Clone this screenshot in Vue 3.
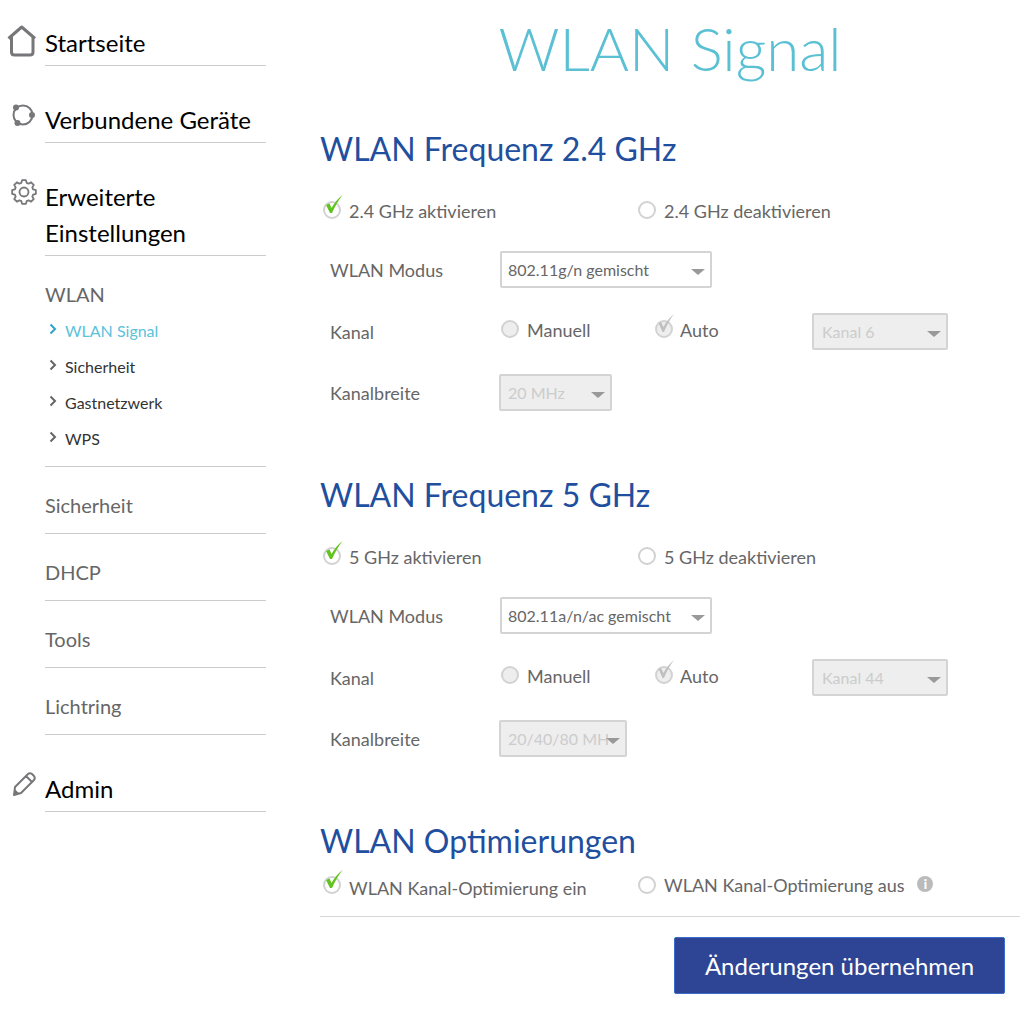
<template>
  <div class="page">
    <nav class="sidebar">
      <div class="nav-top first">
        <svg class="nav-icon" width="37" height="36" viewBox="0 0 37 36">
          <path d="M8.500 13.500 L21.700 2 L35 13.500 M11.500 11 V27 Q11.500 30 14.500 30 H30 Q33 30 33 27 V11" fill="none" stroke="#77777a" stroke-width="3" stroke-linejoin="round" />
        </svg>
        <a class="nav-text">Startseite</a>
      </div>
      <div class="nav-top">
        <svg class="nav-icon" width="37" height="36" viewBox="0 0 37 36">
          <circle cx="23" cy="13" r="9.500" fill="none" stroke="#77777a" stroke-width="2" />
          <circle cx="16" cy="5.500" r="3" fill="#77777a" />
          <circle cx="32" cy="13" r="3" fill="#77777a" />
          <circle cx="17.500" cy="21" r="3" fill="#77777a" />
        </svg>
        <a class="nav-text">Verbundene Geräte</a>
      </div>
      <div class="nav-top">
        <svg class="nav-icon" width="37" height="36" viewBox="0 0 37 36">
          <path :d="gearPath" fill="none" stroke="#77777a" stroke-width="1.800" stroke-linejoin="round" />
          <circle cx="24" cy="13" r="4.500" fill="none" stroke="#77777a" stroke-width="1.800" />
        </svg>
        <a class="nav-text">Erweiterte Einstellungen</a>
      </div>

      <div class="nav-sub">
        <div class="sub-title">WLAN</div>
        <ul>
          <li v-for="item in wlanLinks" :key="item" :class="{ active: item === 'WLAN Signal' }">
            <svg width="20" height="14" viewBox="0 0 20 14">
              <path d="M5.500 1.500 L10 6 L5.500 10.500" fill="none" stroke="currentColor" stroke-width="2" />
            </svg>
            {{ item }}
          </li>
        </ul>
      </div>

      <div v-for="item in otherLinks" :key="item" class="nav-plain">{{ item }}</div>

      <div class="nav-top admin">
        <svg class="nav-icon" width="37" height="36" viewBox="0 0 37 36">
          <path d="M15 16 L28 3 Q30 1.500 32 3 L34 5 Q35.500 7 34 9 L21 22 L14 24 Z M26 5 L32 11" fill="none" stroke="#77777a" stroke-width="2" stroke-linejoin="round" />
          <path d="M13.500 24.500 L15 18.500 L19.500 22.500 Z" fill="#77777a" />
        </svg>
        <a class="nav-text">Admin</a>
      </div>
    </nav>

    <main class="content">
      <h1>WLAN Signal</h1>

      <section v-for="band in bands" :key="band.name" class="band">
        <h2>WLAN Frequenz {{ band.name }}</h2>
        <div class="radio-row">
          <label class="radio-cell">
            <span class="radio"><svg class="tick" width="24" height="24" viewBox="0 0 24 24"><path d="M4 11 L7.500 9.500 L9.500 14 Q14 6 20.500 1 Q15 8 10 19 H8 Z" fill="#62c31f" /></svg></span>
            {{ band.name }} aktivieren
          </label>
          <label class="radio-cell">
            <span class="radio"></span>
            {{ band.name }} deaktivieren
          </label>
        </div>

        <div class="field">
          <span class="field-label">WLAN Modus</span>
          <div class="select-wrap mode">
            <select><option>{{ band.mode }}</option></select>
          </div>
        </div>

        <div class="field">
          <span class="field-label channel-label">Kanal</span>
          <label class="option manual">
            <span class="radio off"></span>
            Manuell
          </label>
          <label class="option auto">
            <span class="radio off"><svg class="tick" width="24" height="24" viewBox="0 0 24 24"><path d="M4.500 10 L7 9 L9.500 14 Q13 7 20 1 Q14.500 8 10 19 H8.500 Z" fill="#c0c0c0" /></svg></span>
            Auto
          </label>
          <div class="select-wrap channel disabled">
            <select disabled><option>{{ band.channel }}</option></select>
          </div>
        </div>

        <div class="field">
          <span class="field-label">Kanalbreite</span>
          <div class="select-wrap disabled width-select" :class="band.widthClass">
            <select disabled><option>{{ band.width }}</option></select>
          </div>
        </div>
      </section>

      <section class="optimise">
        <h2>WLAN Optimierungen</h2>
        <div class="radio-row">
          <label class="radio-cell">
            <span class="radio"><svg class="tick" width="24" height="24" viewBox="0 0 24 24"><path d="M4 11 L7.500 9.500 L9.500 14 Q14 6 20.500 1 Q15 8 10 19 H8 Z" fill="#62c31f" /></svg></span>
            WLAN Kanal-Optimierung ein
          </label>
          <label class="radio-cell up">
            <span class="radio"></span>
            WLAN Kanal-Optimierung aus
            <span class="info">i</span>
          </label>
        </div>
      </section>

      <div class="actions">
        <button type="button">Änderungen übernehmen</button>
      </div>
    </main>
  </div>
</template>

<script setup>
const wlanLinks = ['WLAN Signal', 'Sicherheit', 'Gastnetzwerk', 'WPS']
const otherLinks = ['Sicherheit', 'DHCP', 'Tools', 'Lichtring']

const bands = [
  { name: '2.4 GHz', mode: '802.11g/n gemischt', channel: 'Kanal 6', width: '20 MHz', widthClass: 'narrow' },
  { name: '5 GHz', mode: '802.11a/n/ac gemischt', channel: 'Kanal 44', width: '20/40/80 MHz', widthClass: 'wide' }
]

// Zahnrad-Umriss mit 8 Zähnen
function buildGear(cx, cy, outer, inner, teeth) {
  const step = (Math.PI * 2) / teeth
  const pts = []
  for (let i = 0; i < teeth; i++) {
    const a = i * step
    for (const [off, r] of [[-0.30, inner], [-0.17, outer], [0.17, outer], [0.30, inner]]) {
      const t = a + off * step * 1.2
      pts.push((cx + Math.cos(t) * r).toFixed(2) + ' ' + (cy + Math.sin(t) * r).toFixed(2))
    }
  }
  return 'M' + pts.join(' L') + ' Z'
}
const gearPath = buildGear(24, 13, 12, 9.5, 8)
</script>

<style scoped>
.page {
  display: flex;
  align-items: flex-start;
  width: 1025px;
  height: 1022px;
  overflow: hidden;
  font-family: Lato, "Open Sans", sans-serif;
  color: #666;
  background: #fff;
}

.sidebar {
  flex: none;
  width: 266px;
  padding-left: 8px;
  box-sizing: border-box;
  padding-top: 25px;
}

.nav-top {
  display: flex;
  align-items: flex-start;
  margin-top: 36px;
}
.nav-top.first {
  margin-top: 0;
}
.nav-icon {
  flex: none;
  margin-left: -8px;
  margin-right: 8px;
}
.nav-text {
  flex: 1;
  font-size: 24px;
  line-height: 36px;
  padding-bottom: 4px;
  color: #000;
  border-bottom: 1px solid #ccc;
}

.nav-sub {
  margin-left: 37px;
  padding-top: 20px;
  padding-bottom: 9px;
  border-bottom: 1px solid #ccc;
}
.sub-title {
  font-size: 20px;
  line-height: 36px;
  margin-bottom: 1px;
}
.nav-sub ul {
  list-style: none;
  margin: 0;
  padding: 0;
}
.nav-sub li {
  display: flex;
  align-items: center;
  font-size: 16px;
  line-height: 36px;
  color: #333;
}
.nav-sub li svg {
  color: #666;
  margin-bottom: 2px;
}
.nav-sub li.active {
  color: #5bc2da;
}
.nav-sub li.active svg {
  color: #2ea3cf;
}

.nav-plain {
  margin-left: 37px;
  font-size: 20px;
  line-height: 36px;
  padding: 20px 0 10px;
  border-bottom: 1px solid #ccc;
}

.content {
  flex: none;
  width: 700px;
  margin-left: 54px;
}

h1 {
  margin: 0;
  padding-top: 15px;
  font-size: 60px;
  line-height: 66px;
  font-weight: 300;
  text-align: center;
  color: #5bc0d4;
}

h2 {
  margin: 0;
  font-size: 32px;
  line-height: 40px;
  font-weight: 400;
  color: #1f4f9e;
}

.band {
  padding-top: 48px;
}
.band + .band,
.optimise {
  padding-top: 64px;
}

.radio-row {
  display: flex;
  height: 30px;
  margin-top: 27px;
  margin-left: 3px;
}
.optimise .radio-row {
  margin-top: 12px;
}
.radio-cell {
  display: flex;
  align-items: center;
  width: 315px;
  font-size: 18px;
}

.radio {
  position: relative;
  flex: none;
  box-sizing: border-box;
  width: 18px;
  height: 18px;
  margin-right: 8px;
  margin-bottom: 2px;
  border: 2px solid #d2d2d2;
  border-radius: 50%;
  background: #fff;
}
.radio.off {
  background: #eee;
}
.tick {
  position: absolute;
  left: -3px;
  top: -9px;
}
.optimise .radio {
  margin-bottom: 6px;
}

.field {
  display: flex;
  align-items: center;
  height: 37px;
  margin-top: 24px;
  padding-left: 10px;
  font-size: 18px;
}
.radio-row + .field,
.field:nth-of-type(3) {
  margin-top: 25px;
}
.field-label {
  width: 170px;
}
.channel-label {
  margin-top: 1px;
}

.option {
  display: flex;
  align-items: center;
  margin-bottom: 3px;
}
.option .radio {
  margin-bottom: 3px;
}
.manual {
  margin-left: 1px;
  width: 154px;
}
.auto {
  width: 157px;
}
.auto .radio {
  margin-right: 7px;
}

.select-wrap {
  position: relative;
  box-sizing: border-box;
  height: 37px;
}
.select-wrap select {
  display: block;
  width: 100%;
  height: 100%;
  box-sizing: border-box;
  padding: 0 0 0 6px;
  appearance: none;
  border: 2px solid #d4d4d4;
  border-radius: 2px;
  background: #fff;
  font-family: inherit;
  font-size: 16px;
  color: #666;
  opacity: 1;
}
.select-wrap::after {
  content: "";
  position: absolute;
  right: 7px;
  top: 18px;
  border-left: 7px solid transparent;
  border-right: 7px solid transparent;
  border-top: 6px solid #999;
}
.select-wrap.disabled select {
  padding-left: 7px;
  background: #eee;
  color: #ccc;
}
.select-wrap.channel select {
  padding-left: 8px;
}
.mode {
  width: 212px;
}
.channel {
  width: 136px;
}
.width-select {
  margin-left: -1px;
}
.narrow {
  width: 113px;
}
.wide {
  width: 128px;
}
.select-wrap.wide select {
  padding-right: 17px;
}

.info {
  box-sizing: border-box;
  width: 16px;
  height: 16px;
  margin-left: 13px;
  margin-bottom: 2px;
  border-radius: 50%;
  background: #bbb;
  color: #fff;
  font-size: 13px;
  font-weight: 900;
  line-height: 16px;
  text-align: center;
}
.up {
  margin-bottom: 6px;
}
.optimise .up .radio {
  margin-bottom: 0;
}

.actions {
  display: flex;
  justify-content: flex-end;
  margin-top: 13px;
  padding-top: 20px;
  padding-right: 15px;
  border-top: 1px solid #d8d8d8;
}
button {
  width: 331px;
  height: 57px;
  border: 1px solid #3a6cc8;
  border-radius: 2px;
  background: #2e4595;
  color: #fff;
  font-family: inherit;
  font-size: 24px;
}
</style>
